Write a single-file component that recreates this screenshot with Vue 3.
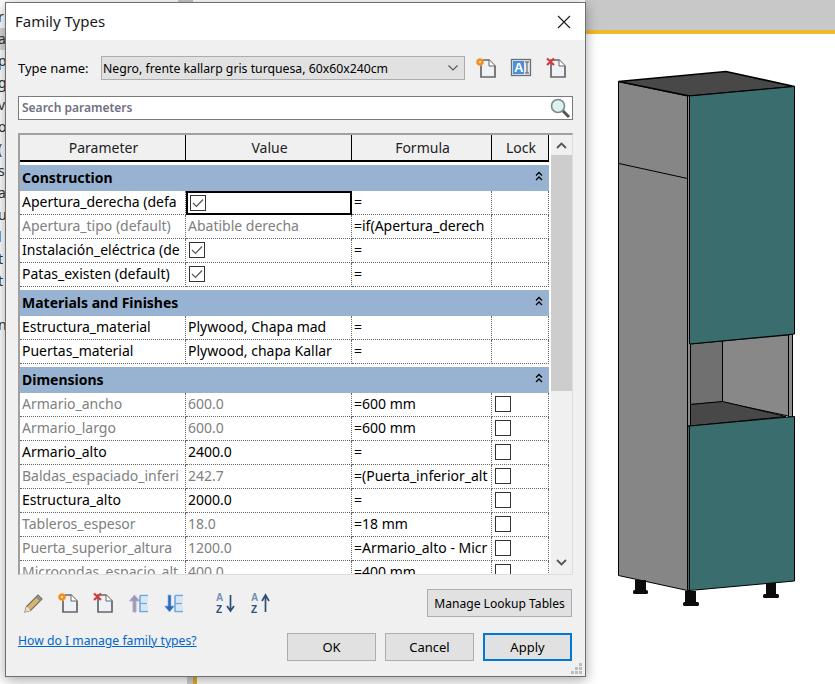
<template>
  <div class="screen">
    <!-- window behind the dialog, only a sliver shows -->
    <div class="back-text">
      <span v-for="(c, i) in backLetters" :key="i" :class="{ hot: i === 1 }">{{ c }}</span>
    </div>
    <div class="top-bar"></div>
    <div class="top-stub"></div>
    <div class="bottom-stub"></div>

    <!-- 3D view -->
    <svg class="model" width="250" height="570" viewBox="585 50 250 570">
      <g stroke="#000" stroke-width="1">
        <polygon points="618.5,81.5 687.5,96 687.5,590.5 618.5,575.5" fill="#868686" />
        <polygon points="618.5,81.5 726,71.5 794.5,86.5 689.5,96" fill="#484848" stroke-width="1.6" />
        <polygon points="690.5,344 722.5,341 722.5,402 690.5,404.5" fill="#707070" />
        <polygon points="722.5,341 788.5,335 788.5,416 722.5,402" fill="#888888" />
        <polygon points="788.5,335 792.5,334 792.5,417 788.5,417" fill="#8c8c8c" />
        <polygon points="690.5,404.5 722.5,401.5 786,416.5 690.5,426" fill="#484848" />
        <polygon points="687.5,96 690.5,96 690.5,426 687.5,426" fill="#8a8a8a" />
        <polygon points="689.5,96 794.5,86.5 794.5,334 689.5,344" fill="#3a6e6e" />
        <polygon points="689.5,426 794.5,416.5 794.5,581 689.5,590.5" fill="#3a6e6e" />
        <polygon points="687.5,426 689.5,426 689.5,590.5 687.5,590.5" fill="#3a6e6e" />
        <line x1="619" y1="163.5" x2="687.5" y2="178.5" />
      </g>
      <g fill="#0c0c0c">
        <rect x="635" y="580" width="11" height="10" />
        <rect x="633" y="590" width="15" height="4" rx="1.5" />
        <rect x="685" y="591" width="11" height="12" />
        <rect x="683" y="602" width="16" height="4" rx="1.5" />
        <rect x="766" y="583" width="10" height="12" />
        <rect x="763" y="594" width="16" height="4" rx="1.5" />
      </g>
    </svg>

    <div class="dialog">
      <div class="title-bar">
        <span class="title">Family Types</span>
        <svg class="close" width="14" height="14" viewBox="0 0 14 14">
          <path d="M1 1 L13 13 M13 1 L1 13" stroke="#1a1a1a" stroke-width="1.1" fill="none" />
        </svg>
      </div>

      <div class="body">
        <div class="type-row">
          <label class="type-label">Type name:</label>
          <div class="combo">
            <span>Negro, frente kallarp gris turquesa, 60x60x240cm</span>
            <svg width="12" height="8" viewBox="0 0 12 8">
              <path d="M1.5 1.5 L6 6 L10.5 1.5" stroke="#555" stroke-width="1.1" fill="none" />
            </svg>
          </div>
          <div class="type-icons">
            <svg width="22" height="22" viewBox="0 0 22 22">
              <path d="M6 3 H14 L20 9 V20 H6 Z" fill="#eef2f7" stroke="#666" stroke-width="1.7" />
              <path d="M14 3 V9 H20" fill="#fff" stroke="#666" stroke-width="1" />
              <circle cx="5" cy="5" r="3.6" fill="#f08a1d" stroke="#f6b05a" stroke-dasharray="2 1" />
              <circle cx="5" cy="5" r="1.3" fill="#ffe08a" />
            </svg>
            <svg width="22" height="22" viewBox="0 0 22 22">
              <rect x="1.5" y="2.5" width="19" height="16" fill="#e4e9ef" stroke="#6a7078" stroke-width="1.3" />
              <rect x="3" y="4" width="11" height="13" fill="#4a90d6" />
              <text x="4" y="15" class="ai-a">A</text>
              <path d="M15 5 H19 M17 5 V16 M15 16 H19" stroke="#555" stroke-width="1" fill="none" />
            </svg>
            <svg width="22" height="22" viewBox="0 0 22 22">
              <path d="M6 3 H14 L20 9 V20 H6 Z" fill="#eef2f7" stroke="#666" stroke-width="1.7" />
              <path d="M14 3 V9 H20" fill="#fff" stroke="#666" stroke-width="1" />
              <path d="M2 1.5 L9 8 M9 1.5 L2 8" stroke="#d33b3b" stroke-width="2.2" />
            </svg>
          </div>
        </div>

        <div class="search">
          <span>Search parameters</span>
          <svg width="24" height="24" viewBox="0 0 24 24">
            <circle cx="10" cy="10" r="6.5" fill="#dff0f0" stroke="#7b8a8a" stroke-width="1.6" />
            <path d="M15 15 L21 21" stroke="#555" stroke-width="3" />
          </svg>
        </div>

        <div class="grid">
          <div class="table">
            <div class="head">
              <div v-for="h in headers" :key="h" class="head-cell">{{ h }}</div>
            </div>
            <template v-for="group in groups" :key="group.name">
              <div class="group">
                <span>{{ group.name }}</span>
                <svg width="8" height="10" viewBox="0 0 8 10">
                  <path d="M1 4.5 L4 1.5 L7 4.5 M1 9 L4 6 L7 9" stroke="#000" stroke-width="1.3" fill="none" />
                </svg>
              </div>
              <div v-for="row in group.rows" :key="row.name" class="row" :class="{ locked: row.grey }">
                <div class="cell">{{ row.name }}</div>
                <div class="cell" :class="{ selected: row.selected }">
                  <span v-if="row.check" class="check">
                    <svg width="12" height="10" viewBox="0 0 12 10">
                      <path d="M1 5 L4.5 8.5 L11 1.5" stroke="#555" stroke-width="1.2" fill="none" />
                    </svg>
                  </span>
                  <template v-else>{{ row.value }}</template>
                </div>
                <div class="cell formula"><span class="eq">=</span>{{ row.formula }}</div>
                <div class="cell lock"><span v-if="row.lock" class="lock-box"></span></div>
              </div>
            </template>
          </div>
          <div class="scrollbar">
            <div class="arrow">
              <svg width="11" height="7" viewBox="0 0 11 7">
                <path d="M1 6 L5.5 1.5 L10 6" stroke="#555" stroke-width="1.8" fill="none" />
              </svg>
            </div>
            <div class="thumb"></div>
            <div class="arrow down">
              <svg width="11" height="7" viewBox="0 0 11 7">
                <path d="M1 1 L5.5 5.5 L10 1" stroke="#555" stroke-width="1.8" fill="none" />
              </svg>
            </div>
          </div>
        </div>

        <div class="tools">
          <div class="tool-icons">
            <!-- pencil -->
            <svg width="22" height="22" viewBox="0 0 22 22">
              <path d="M3 20 L4.5 14.5 L16 3 L20 7 L8.5 18.5 Z" fill="#d7b56d" stroke="#6e6e6e" stroke-width="1.2" />
              <path d="M14.5 4.5 L18.5 8.5" stroke="#8a8a8a" stroke-width="2" />
              <path d="M3 20 L4.5 14.5 L8.5 18.5 Z" fill="#efe3c8" />
            </svg>
            <svg width="22" height="22" viewBox="0 0 22 22">
              <path d="M6 3 H14 L20 9 V20 H6 Z" fill="#eef2f7" stroke="#666" stroke-width="1.7" />
              <path d="M14 3 V9 H20" fill="#fff" stroke="#666" stroke-width="1" />
              <circle cx="5" cy="5" r="3.6" fill="#f08a1d" stroke="#f6b05a" stroke-dasharray="2 1" />
              <circle cx="5" cy="5" r="1.3" fill="#ffe08a" />
            </svg>
            <svg width="22" height="22" viewBox="0 0 22 22">
              <path d="M6 3 H14 L20 9 V20 H6 Z" fill="#eef2f7" stroke="#666" stroke-width="1.7" />
              <path d="M14 3 V9 H20" fill="#fff" stroke="#666" stroke-width="1" />
              <path d="M2 1.5 L9 8 M9 1.5 L2 8" stroke="#d33b3b" stroke-width="2.2" />
            </svg>
            <svg width="22" height="22" viewBox="0 0 22 22">
              <path d="M6 20 V9 H2.5 L7.5 3 L12.5 9 H9 V20 Z" fill="#9c9ca4" stroke="#b6a6e0" />
              <path d="M13 3.5 H21 M13 3.5 V19.5 H21 M13 11.5 H20" stroke="#6fa8dc" stroke-width="1.6" fill="none" />
              <rect x="14" y="5" width="7" height="5" fill="#d5e6f6" />
              <rect x="14" y="13" width="7" height="5" fill="#d5e6f6" />
            </svg>
            <svg width="22" height="22" viewBox="0 0 22 22">
              <path d="M6 3 V14 H2.5 L7.5 20 L12.5 14 H9 V3 Z" fill="#1d6fc2" stroke="#b6a6e0" stroke-width=".7" />
              <path d="M13 3.5 H21 M13 3.5 V19.5 H21 M13 11.5 H20" stroke="#6fa8dc" stroke-width="1.6" fill="none" />
              <rect x="14" y="5" width="7" height="5" fill="#d5e6f6" />
              <rect x="14" y="13" width="7" height="5" fill="#d5e6f6" />
            </svg>
            <svg class="sort-first" width="22" height="22" viewBox="0 0 22 22">
              <text x="1" y="9" class="sort-a">A</text>
              <text x="1" y="20.5" class="sort-z">Z</text>
              <path d="M15.5 3 V18 M12 14 L15.5 19 L19 14" stroke="#2f4f78" stroke-width="1.7" fill="none" />
            </svg>
            <svg width="22" height="22" viewBox="0 0 22 22">
              <text x="1" y="9" class="sort-a">A</text>
              <text x="1" y="20.5" class="sort-z">Z</text>
              <path d="M15.5 20 V5 M12 9 L15.5 3 L19 9" stroke="#2f4f78" stroke-width="1.7" fill="none" />
            </svg>
          </div>
          <button class="btn lookup">Manage Lookup Tables</button>
        </div>

        <div class="footer">
          <a class="help">How do I manage family types?</a>
          <div class="footer-btns">
            <button class="btn wide">OK</button>
            <button class="btn wide">Cancel</button>
            <button class="btn wide primary">Apply</button>
          </div>
        </div>
      </div>

      <svg class="grip" width="12" height="12" viewBox="0 0 12 12">
        <g fill="#bdbdbd">
          <rect x="8" y="0" width="3" height="3" />
          <rect x="4" y="4" width="3" height="3" />
          <rect x="8" y="4" width="3" height="3" />
          <rect x="0" y="8" width="3" height="3" />
          <rect x="4" y="8" width="3" height="3" />
          <rect x="8" y="8" width="3" height="3" />
        </g>
      </svg>
    </div>
  </div>
</template>

<script setup>
const backLetters = ['r', 'a', 'p', 'g', 'v', 'o', '(', 's', 'a', 'u', 'l', 't', 't', '', 'n']

const headers = ['Parameter', 'Value', 'Formula', 'Lock']

const groups = [
  {
    name: 'Construction',
    rows: [
      { name: 'Apertura_derecha (defa', check: true, selected: true, formula: '' },
      { name: 'Apertura_tipo (default)', value: 'Abatible derecha', formula: 'if(Apertura_derech', grey: true },
      { name: 'Instalación_eléctrica (de', check: true, formula: '' },
      { name: 'Patas_existen (default)', check: true, formula: '' }
    ]
  },
  {
    name: 'Materials and Finishes',
    rows: [
      { name: 'Estructura_material', value: 'Plywood, Chapa mad', formula: '' },
      { name: 'Puertas_material', value: 'Plywood, chapa Kallar', formula: '' }
    ]
  },
  {
    name: 'Dimensions',
    rows: [
      { name: 'Armario_ancho', value: '600.0', formula: '600 mm', lock: true, grey: true },
      { name: 'Armario_largo', value: '600.0', formula: '600 mm', lock: true, grey: true },
      { name: 'Armario_alto', value: '2400.0', formula: '', lock: true },
      { name: 'Baldas_espaciado_inferi', value: '242.7', formula: '(Puerta_inferior_alt', lock: true, grey: true },
      { name: 'Estructura_alto', value: '2000.0', formula: '', lock: true },
      { name: 'Tableros_espesor', value: '18.0', formula: '18 mm', lock: true, grey: true },
      { name: 'Puerta_superior_altura', value: '1200.0', formula: 'Armario_alto - Micr', lock: true, grey: true },
      { name: 'Microondas_espacio_alt', value: '400.0', formula: '400 mm', lock: true, grey: true }
    ]
  }
]
</script>

<style>
html, body {
  margin: 0;
  background: #fff;
}
</style>

<style scoped>
.screen {
  position: relative;
  width: 835px;
  height: 684px;
  overflow: hidden;
  background: #fff;
  font-family: "Noto Sans", "Open Sans", sans-serif;
  color: #000;
}

/* fondo */
.back-text {
  position: absolute;
  left: 0;
  top: 6px;
  width: 5px;
  display: flex;
  flex-direction: column;
  font-size: 14px;
  line-height: 22px;
  color: #333;
}

.back-text span {
  display: block;
  height: 22px;
  margin-left: -2px;
}

.back-text .hot {
  background: #d9d9d9;
  width: 8px;
}

.top-bar {
  position: absolute;
  left: 585px;
  right: 0;
  top: 0;
  height: 30px;
  background: #c8c8c8;
  border-bottom: 4px solid #f2b92c;
}

.top-stub {
  position: absolute;
  left: 178px;
  top: 0;
  width: 15px;
  height: 2px;
  background: #c8c8c8;
}

.bottom-stub {
  position: absolute;
  left: 187px;
  top: 676px;
  width: 6px;
  height: 8px;
  background: #d0d0d0;
  border-right: 4px solid #e2ad2c;
}

.model {
  position: absolute;
  left: 585px;
  top: 50px;
}

/* dialogo */
.dialog {
  position: absolute;
  left: 5px;
  top: 2px;
  width: 581px;
  height: 675px;
  box-sizing: border-box;
  border: 1px solid #6f6f6f;
  background: #f0f0f0;
  box-shadow: 0 3px 12px rgba(0, 0, 0, 0.35);
  display: flex;
  flex-direction: column;
}

.title-bar {
  height: 37px;
  background: #fff;
  display: flex;
  align-items: center;
  justify-content: space-between;
  padding: 0 14px 0 9px;
  flex-shrink: 0;
}

.title {
  font-size: 15px;
  color: #1a1a1a;
  margin-top: -2px;
}

.close {
  margin-top: 1px;
}

.body {
  padding: 16px 12px 0;
  flex: 1;
  display: flex;
  flex-direction: column;
  font-size: 13px;
}

.type-row {
  display: flex;
  align-items: center;
  height: 24px;
}

.type-label {
  width: 83px;
}

.combo {
  width: 364px;
  height: 24px;
  box-sizing: border-box;
  border: 1px solid #adadad;
  background: #e1e1e1;
  display: flex;
  align-items: center;
  justify-content: space-between;
  padding: 0 5px 0 1px;
  font-size: 12.25px;
}

.type-icons {
  display: flex;
  gap: 13px;
  margin-left: 10px;
}

.search {
  margin-top: 16px;
  height: 24px;
  box-sizing: border-box;
  border: 1px solid #7a7a7a;
  background: #fff;
  display: flex;
  align-items: center;
  justify-content: space-between;
  padding-left: 3px;
  font-size: 12px;
  font-weight: 600;
  color: #707080;
}

.search span {
  margin-top: -2px;
}

/* tabla */
.grid {
  margin-top: 13px;
  height: 442px;
  box-sizing: border-box;
  border-top: 2px solid #a0a0a0;
  border-left: 2px solid #a0a0a0;
  border-right: 1px solid #dcdcdc;
  border-bottom: 1px solid #dcdcdc;
  background: #fff;
  display: flex;
  overflow: hidden;
}

.table {
  width: 529px;
  flex-shrink: 0;
  overflow: hidden;
  font-size: 14px;
}

.head,
.row {
  display: grid;
  grid-template-columns: 166px 166px 140px 57px;
}

.head {
  height: 27px;
  box-sizing: border-box;
  background: #f0f0f0;
  border-bottom: 2px solid #000;
}

.head-cell {
  display: flex;
  align-items: center;
  justify-content: center;
  border-right: 1px solid #000;
  padding-left: 2px;
  color: #222;
}

.group {
  margin-top: 3px;
  height: 26px;
  box-sizing: border-box;
  background: #98b3d1;
  display: flex;
  align-items: center;
  justify-content: space-between;
  padding: 0 6px 2px 2px;
  font-weight: 700;
}

.group svg {
  margin-top: -3px;
}

.row {
  height: 24px;
}

.cell {
  box-sizing: border-box;
  border-right: 1px dotted #666;
  border-bottom: 1px dotted #666;
  padding: 0 0 2px 2px;
  display: flex;
  align-items: center;
  white-space: nowrap;
  overflow: hidden;
}

.row.locked .cell {
  color: #808080;
}

.row.locked .formula {
  color: #000;
}

.cell.selected {
  border: 2px solid #000;
  padding: 0 0 1px 1px;
}

.check {
  width: 16px;
  height: 16px;
  box-sizing: border-box;
  border: 1px solid #333;
  margin-left: 1px;
  display: flex;
  align-items: center;
  justify-content: center;
}

.eq {
  width: 8px;
  flex-shrink: 0;
}

.lock {
  padding-left: 3px;
}

.lock-box {
  width: 16px;
  height: 16px;
  box-sizing: border-box;
  border: 1px solid #333;
  background: #fff;
}

.scrollbar {
  flex: 1;
  background: #f0f0f0;
  margin-left: 2px;
  display: flex;
  flex-direction: column;
}

.arrow {
  height: 20px;
  display: flex;
  align-items: center;
  justify-content: center;
}

.arrow.down {
  margin-top: auto;
  height: 24px;
}

.thumb {
  height: 236px;
  background: #cdcdcd;
}

/* barra inferior */
.tools {
  margin-top: 14px;
  height: 28px;
  display: flex;
  align-items: center;
  justify-content: space-between;
  padding-right: 1px;
}

.tool-icons {
  display: flex;
  gap: 13px;
  padding-left: 4px;
}

.sort-first {
  margin-left: 18px;
}

.btn {
  height: 28px;
  box-sizing: border-box;
  border: 1px solid #adadad;
  background: #e1e1e1;
  font-family: inherit;
  font-size: 13px;
  color: #000;
  padding: 0;
}

.lookup {
  width: 145px;
  font-size: 12.1px;
}

.footer {
  margin-top: 16px;
  display: flex;
  justify-content: space-between;
  padding-right: 1px;
}

.help {
  font-size: 12.2px;
  color: #0066cc;
  text-decoration: underline;
  line-height: 16px;
}

.footer-btns {
  display: flex;
  gap: 9px;
}

.wide {
  width: 89px;
}

.primary {
  border: 2px solid #0078d7;
}

.grip {
  position: absolute;
  right: 2px;
  bottom: 1px;
}

.ai-a {
  font-family: "Liberation Sans", sans-serif;
  font-size: 13px;
  font-weight: 700;
  fill: #fff;
}

.sort-a,
.sort-z {
  font-family: "Liberation Sans", sans-serif;
  font-size: 10px;
  font-weight: 700;
}

.sort-a {
  fill: #6f8fb5;
}

.sort-z {
  fill: #2f4f78;
}
</style>
